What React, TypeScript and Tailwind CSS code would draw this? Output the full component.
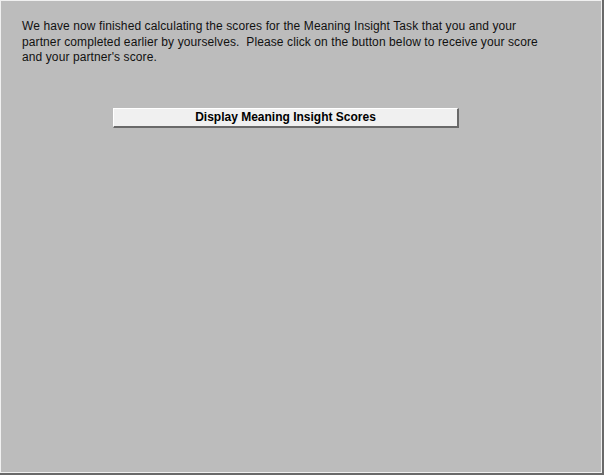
export default function App() {
  return (
    <div className="h-[475px] w-[604px] bg-[#696969] font-['Liberation_Sans',Arial,sans-serif]">
      <div className="h-[473px] w-[602px] border border-[#f0f0f0] bg-[#bcbcbc] text-[12px] leading-[15.5px] text-[#111]">
        <div className="px-[21px] pt-[18px]">
          <p className="tracking-[0.1px]">
            We have now finished calculating the scores for the Meaning Insight Task that you and your
            <br />
            partner completed earlier by yourselves.&nbsp; Please click on the button below to receive your score
            <br />
            and your partner's score.
          </p>
        </div>
        <div className="pl-[112px] pt-[42px]">
          <button
            type="button"
            className="h-[20px] w-[346px] border-t border-l border-r-2 border-b-2 border-t-white border-l-white border-r-[#696969] border-b-[#696969] bg-[#f0f0f0] pb-px text-[12px] font-bold leading-none text-black"
          >
            Display Meaning Insight Scores
          </button>
        </div>
      </div>
    </div>
  );
}
